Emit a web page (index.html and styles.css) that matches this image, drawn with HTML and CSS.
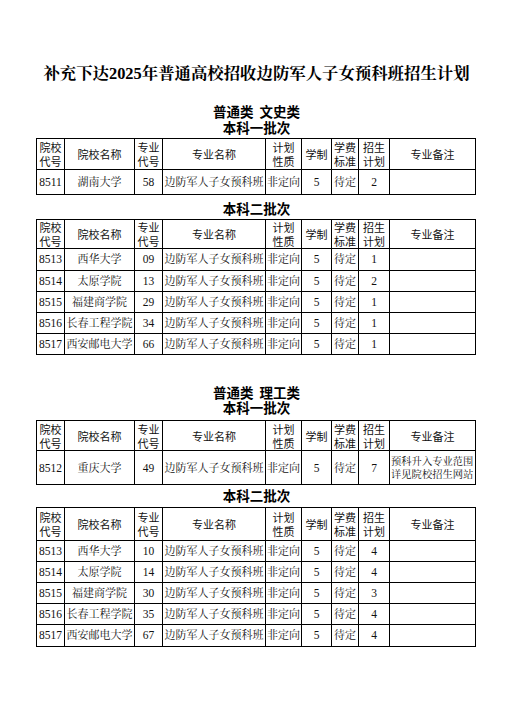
FILE: index.html
```html
<!DOCTYPE html>
<html lang="zh-CN">
<head>
<meta charset="utf-8">
<title>补充下达2025年普通高校招收边防军人子女预科班招生计划</title>
<link rel="stylesheet" href="styles.css">
</head>
<body>
<div class="page">
  <h1 class="title">补充下达2025年普通高校招收边防军人子女预科班招生计划</h1>

  <div class="heading h-first">
    <div>普通类&nbsp;&nbsp;文史类</div>
    <div>本科一批次</div>
  </div>
  <table class="plan">
    <colgroup>
      <col class="c1"><col class="c2"><col class="c3"><col class="c4"><col class="c5"><col class="c6"><col class="c7"><col class="c8"><col class="c9">
    </colgroup>
    <tr class="hd hd-31">
      <th>院校<br>代号</th><th>院校名称</th><th>专业<br>代号</th><th>专业名称</th><th>计划<br>性质</th><th>学制</th><th>学费<br>标准</th><th>招生<br>计划</th><th>专业备注</th>
    </tr>
    <tr class="row r25">
      <td class="num">8511</td><td>湖南大学</td><td class="num">58</td><td>边防军人子女预科班</td><td>非定向</td><td class="num">5</td><td>待定</td><td class="num">2</td><td></td>
    </tr>
  </table>

  <div class="heading h-sub">本科二批次</div>
  <table class="plan">
    <colgroup>
      <col class="c1"><col class="c2"><col class="c3"><col class="c4"><col class="c5"><col class="c6"><col class="c7"><col class="c8"><col class="c9">
    </colgroup>
    <tr class="hd hd-27">
      <th>院校<br>代号</th><th>院校名称</th><th>专业<br>代号</th><th>专业名称</th><th>计划<br>性质</th><th>学制</th><th>学费<br>标准</th><th>招生<br>计划</th><th>专业备注</th>
    </tr>
    <tr class="row r21">
      <td class="num">8513</td><td>西华大学</td><td class="num">09</td><td>边防军人子女预科班</td><td>非定向</td><td class="num">5</td><td>待定</td><td class="num">1</td><td></td>
    </tr>
    <tr class="row r21">
      <td class="num">8514</td><td>太原学院</td><td class="num">13</td><td>边防军人子女预科班</td><td>非定向</td><td class="num">5</td><td>待定</td><td class="num">2</td><td></td>
    </tr>
    <tr class="row r21">
      <td class="num">8515</td><td>福建商学院</td><td class="num">29</td><td>边防军人子女预科班</td><td>非定向</td><td class="num">5</td><td>待定</td><td class="num">1</td><td></td>
    </tr>
    <tr class="row r21">
      <td class="num">8516</td><td>长春工程学院</td><td class="num">34</td><td>边防军人子女预科班</td><td>非定向</td><td class="num">5</td><td>待定</td><td class="num">1</td><td></td>
    </tr>
    <tr class="row r21">
      <td class="num">8517</td><td>西安邮电大学</td><td class="num">66</td><td>边防军人子女预科班</td><td>非定向</td><td class="num">5</td><td>待定</td><td class="num">1</td><td></td>
    </tr>
  </table>

  <div class="heading h-second">
    <div>普通类&nbsp;&nbsp;理工类</div>
    <div>本科一批次</div>
  </div>
  <table class="plan">
    <colgroup>
      <col class="c1"><col class="c2"><col class="c3"><col class="c4"><col class="c5"><col class="c6"><col class="c7"><col class="c8"><col class="c9">
    </colgroup>
    <tr class="hd hd-30">
      <th>院校<br>代号</th><th>院校名称</th><th>专业<br>代号</th><th>专业名称</th><th>计划<br>性质</th><th>学制</th><th>学费<br>标准</th><th>招生<br>计划</th><th>专业备注</th>
    </tr>
    <tr class="row r34">
      <td class="num">8512</td><td>重庆大学</td><td class="num">49</td><td>边防军人子女预科班</td><td>非定向</td><td class="num">5</td><td>待定</td><td class="num">7</td><td class="note">预科升入专业范围<br>详见院校招生网站</td>
    </tr>
  </table>

  <div class="heading h-sub2">本科二批次</div>
  <table class="plan">
    <colgroup>
      <col class="c1"><col class="c2"><col class="c3"><col class="c4"><col class="c5"><col class="c6"><col class="c7"><col class="c8"><col class="c9">
    </colgroup>
    <tr class="hd hd-33">
      <th>院校<br>代号</th><th>院校名称</th><th>专业<br>代号</th><th>专业名称</th><th>计划<br>性质</th><th>学制</th><th>学费<br>标准</th><th>招生<br>计划</th><th>专业备注</th>
    </tr>
    <tr class="row r21">
      <td class="num">8513</td><td>西华大学</td><td class="num">10</td><td>边防军人子女预科班</td><td>非定向</td><td class="num">5</td><td>待定</td><td class="num">4</td><td></td>
    </tr>
    <tr class="row r21">
      <td class="num">8514</td><td>太原学院</td><td class="num">14</td><td>边防军人子女预科班</td><td>非定向</td><td class="num">5</td><td>待定</td><td class="num">4</td><td></td>
    </tr>
    <tr class="row r21">
      <td class="num">8515</td><td>福建商学院</td><td class="num">30</td><td>边防军人子女预科班</td><td>非定向</td><td class="num">5</td><td>待定</td><td class="num">3</td><td></td>
    </tr>
    <tr class="row r21">
      <td class="num">8516</td><td>长春工程学院</td><td class="num">35</td><td>边防军人子女预科班</td><td>非定向</td><td class="num">5</td><td>待定</td><td class="num">4</td><td></td>
    </tr>
    <tr class="row r21">
      <td class="num">8517</td><td>西安邮电大学</td><td class="num">67</td><td>边防军人子女预科班</td><td>非定向</td><td class="num">5</td><td>待定</td><td class="num">4</td><td></td>
    </tr>
  </table>
</div>
</body>
</html>
```

FILE: styles.css
```css
html, body {
  margin: 0;
  padding: 0;
  background: #ffffff;
}

body {
  width: 509px;
  height: 707px;
  overflow: hidden;
  color: #000;
  font-family: "Liberation Serif", "Noto Serif CJK SC", "Noto Sans CJK SC", serif;
}

.page {
  display: flex;
  flex-direction: column;
  align-items: flex-start;
  padding: 64px 0 0 36px;
}

.title {
  margin: 0 0 0 -34px;
  width: 509px;
  text-align: center;
  font-size: 16.4px;
  line-height: 20px;
  font-weight: 700;
  white-space: nowrap;
  font-family: "Liberation Serif", "Noto Serif CJK SC", "Noto Sans CJK SC", serif;
}

.heading {
  width: 439px;
  text-align: center;
  font-family: "Noto Sans CJK SC", sans-serif;
  font-size: 13.5px;
  line-height: 15.6px;
  font-weight: 700;
  padding-left: 2px;
  box-sizing: border-box;
}

.h-first { margin: 20px 0 2.6px; }
.h-sub { margin: 6px 0 3px; }
.h-second { margin: 29.5px 0 4px; }
.h-sub2 { margin: 3px 0 3px; }

.plan {
  width: 439px;
  table-layout: fixed;
  border-collapse: collapse;
}

.c1 { width: 28px; }
.c2 { width: 70px; }
.c3 { width: 28px; }
.c4 { width: 103px; }
.c5 { width: 36px; }
.c6 { width: 30px; }
.c7 { width: 27px; }
.c8 { width: 31px; }
.c9 { width: 86px; }

.plan th,
.plan td {
  border: 1px solid #000;
  padding: 0 1px;
  text-align: center;
  vertical-align: middle;
  white-space: nowrap;
  overflow: hidden;
}

.plan th {
  font-family: "Noto Sans CJK SC", sans-serif;
  font-weight: 400;
  font-size: 11px;
  line-height: 14px;
  color: #111;
}

.plan td {
  font-family: "Liberation Serif", "Noto Serif CJK SC", "Noto Sans CJK SC", serif;
  font-size: 11px;
  line-height: 14px;
  color: #111;
}

.plan td.num {
  font-size: 11.5px;
}

.plan td.note {
  font-size: 10.3px;
  line-height: 13px;
  text-align: left;
}

.hd-31 { height: 31px; }
.hd-27 { height: 27px; }
.hd-30 { height: 30px; }
.hd-33 { height: 33px; }
.r25 { height: 25px; }
.r21 { height: 21.2px; }
.r34 { height: 34px; }
```
